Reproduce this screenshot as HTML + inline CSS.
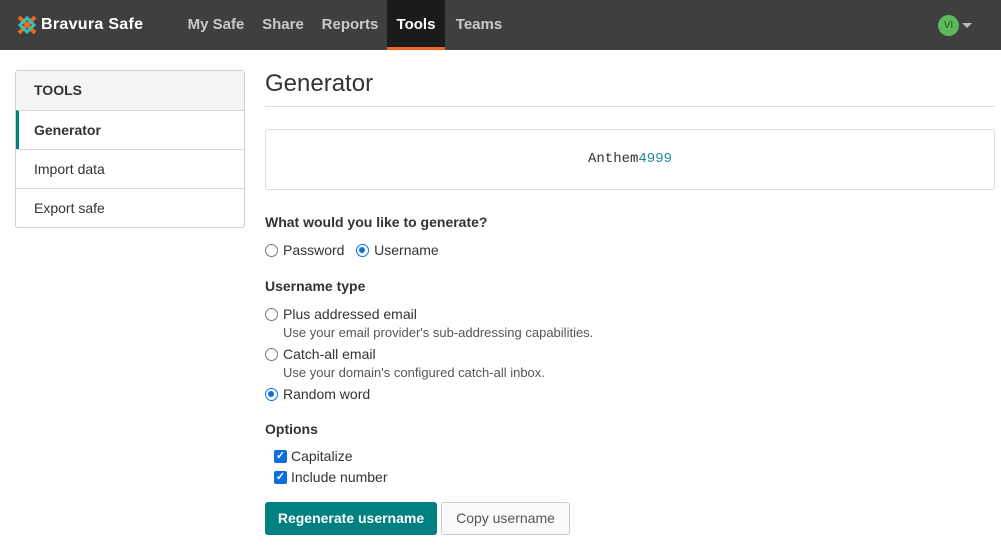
<!DOCTYPE html>
<html><head><style>
*{box-sizing:border-box;margin:0;padding:0}
body{width:1001px;height:556px;overflow:hidden;background:#fff;font-family:"Liberation Sans",sans-serif;color:#333;font-size:14px}
.nav{height:50px;background:#3f3f3f;position:relative}
.logo{position:absolute;left:16px;top:14px;display:flex;align-items:center;color:#fff;font-weight:bold;font-size:16px;letter-spacing:0.3px}
.links a{position:absolute;top:0;height:50px;line-height:50px;color:#c9c9c9;font-weight:bold;font-size:15px;text-decoration:none;text-align:center}
.links a.act{background:#1b1b1b;color:#fff;border-bottom:3px solid #f26522}
.av{position:absolute;left:938px;top:15px;width:21px;height:21px;border-radius:50%;background:#5cb85c;color:#1f5f1f;font-size:10px;text-align:center;line-height:21px}
.car{position:absolute;left:962px;top:23px;border-left:5px solid transparent;border-right:5px solid transparent;border-top:5px solid #bbb}
.side{position:absolute;left:15px;top:70px;width:230px;border:1px solid #d0d0d0;border-radius:3px}
.side div{height:39px;line-height:38px;padding-left:18px;border-top:1px solid #d8d8d8;font-size:14px}
.side div:first-child{border-top:none;background:#f4f4f4;font-weight:bold;height:39px}
.side .sel{border-left:3px solid #008080;padding-left:15px;font-weight:bold}
.main{position:absolute;left:265px;top:0;width:730px}
h1{position:absolute;top:70px;font-size:24px;font-weight:normal;color:#333}
.hr{position:absolute;top:106px;left:0;width:730px;border-top:1px solid #ddd}
.box{position:absolute;top:129px;left:0;width:730px;height:61px;border:1px solid #ddd;border-radius:3px;text-align:center;line-height:58px;font-family:"Liberation Mono",monospace;font-size:14px}
.t{position:absolute;left:0;font-size:14px;display:flex;align-items:center;height:18px}
.b{font-weight:bold}
.r{display:inline-block;width:13px;height:13px;border:1px solid #777;border-radius:50%;margin-right:5px;position:relative;flex:none}
.r.on{border:1.5px solid #0b6fe0}
.r.on::after{content:"";position:absolute;left:2px;top:2px;width:6px;height:6px;border-radius:50%;background:#0b6fe0}
.c{display:inline-block;width:13px;height:13px;background:#0b6fe0;border-radius:2px;margin-right:4px;color:#fff;font-size:11px;line-height:13px;text-align:center;font-weight:bold;flex:none}
.h{color:#555;font-size:13px}
.btn1{position:absolute;left:0;top:502px;width:172px;height:33px;background:#008080;color:#fff;font-weight:bold;border-radius:3px;text-align:center;line-height:33px;font-size:14px}
.btn2{position:absolute;left:176px;top:502px;width:129px;height:33px;border:1px solid #ccc;color:#555;border-radius:3px;text-align:center;line-height:31px;background:#fafafa;font-size:14px}
</style></head><body>
<div class="nav">
<div class="logo"><svg width="22" height="22" viewBox="0 0 22 22"><path d="M3 3 L19 19 M19 3 L3 19" stroke="#f26522" stroke-width="4"/><path d="M4 11 L11 4 L18 11 L11 18Z" fill="none" stroke="#2ec4b6" stroke-width="3"/></svg><span style="margin-left:3px">Bravura Safe</span></div>
<div class="links">
<a style="left:181px;width:70px">My Safe</a>
<a style="left:254px;width:58px">Share</a>
<a style="left:315px;width:70px">Reports</a>
<a class="act" style="left:387px;width:58px">Tools</a>
<a style="left:448px;width:62px">Teams</a>
</div>
<div class="av">VI</div><div class="car"></div>
</div>
<div class="side"><div>TOOLS</div><div class="sel">Generator</div><div>Import data</div><div>Export safe</div></div>
<div class="main">
<h1>Generator</h1><div class="hr"></div>
<div class="box">Anthem<span style="color:#1a8f9a">4999</span></div>
<div class="t b" style="top:213px">What would you like to generate?</div>
<div class="t" style="top:241px"><span class="r"></span>Password &nbsp;&nbsp;<span class="r on"></span>Username</div>
<div class="t b" style="top:277px">Username type</div>
<div class="t" style="top:305px"><span class="r"></span>Plus addressed email</div>
<div class="t h" style="top:323px;left:18px">Use your email provider's sub-addressing capabilities.</div>
<div class="t" style="top:345px"><span class="r"></span>Catch-all email</div>
<div class="t h" style="top:363px;left:18px">Use your domain's configured catch-all inbox.</div>
<div class="t" style="top:385px"><span class="r on"></span>Random word</div>
<div class="t b" style="top:420px">Options</div>
<div class="t" style="top:447px;left:9px"><span class="c">✓</span>Capitalize</div>
<div class="t" style="top:468px;left:9px"><span class="c">✓</span>Include number</div>
<div class="btn1">Regenerate username</div>
<div class="btn2">Copy username</div>
</div>
</body></html>
